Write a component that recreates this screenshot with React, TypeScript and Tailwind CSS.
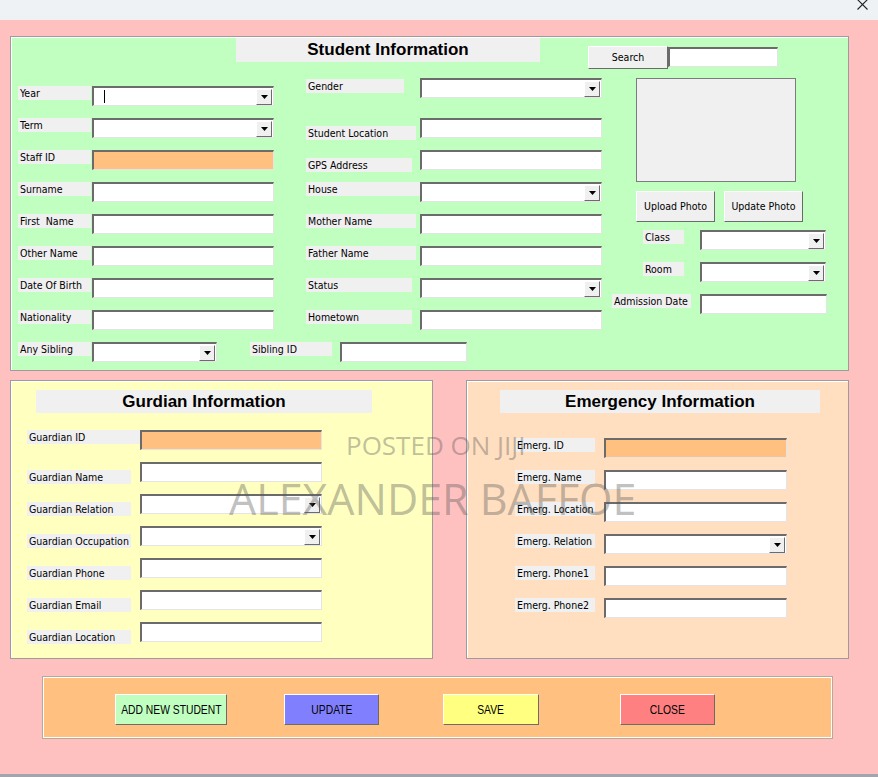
import React from "react";

type Kind = "text" | "drop" | "orange";

const sunken =
  "border-t-2 border-l-2 border-r border-b border-t-[#6b6b6b] border-l-[#6b6b6b] border-r-[#e4e4e4] border-b-[#e4e4e4]";
const raised =
  "border border-t-white border-l-white border-r-[#6b6b6b] border-b-[#6b6b6b]";

const Arrow = () => (
  <div className={`w-[16px] h-[16px] bg-[#f0f0f0] ${raised} flex items-center justify-center`}>
    <svg width="7" height="4" viewBox="0 0 7 4">
      <path d="M0 0h7L3.5 4z" fill="#000" />
    </svg>
  </div>
);

interface BoxProps {
  kind?: Kind;
  width?: string;
  caret?: boolean;
}

const Box = ({ kind = "text", width = "w-[182px]", caret = false }: BoxProps) => (
  <div
    className={`${width} h-[20px] shrink-0 ${sunken} ${
      kind === "orange" ? "bg-[#ffc080]" : "bg-white"
    } flex items-center`}
  >
    {caret && <div className="ml-[10px] w-px h-[13px] bg-black" />}
    {kind === "drop" && (
      <div className="ml-auto mr-px">
        <Arrow />
      </div>
    )}
  </div>
);

interface LabelProps {
  text: string;
  outer: string;
  inner: string;
  shift?: string;
}

const Label = ({ text, outer, inner, shift = "" }: LabelProps) => (
  <div className={`${outer} h-[20px] shrink-0`}>
    <div className={`${inner} ${shift} h-[14px] bg-[#f0f0f0] pl-[2px] leading-[14px] whitespace-pre`}>
      {text}
    </div>
  </div>
);

const FormButton = ({ text, size }: { text: string; size: string }) => (
  <div className={`${size} bg-[#f0f0f0] ${raised} flex items-center justify-center shrink-0`}>
    {text}
  </div>
);

const ActionButton = ({ text, style }: { text: string; style: string }) => (
  <div className={`${style} mt-[17px] h-[31px] ${raised} flex items-center justify-center`}>
    <span className="inline-block scale-x-[0.86] whitespace-nowrap">{text}</span>
  </div>
);

const leftRows: { label: string; kind?: Kind; caret?: boolean }[] = [
  { label: "Year", kind: "drop", caret: true },
  { label: "Term", kind: "drop" },
  { label: "Staff ID", kind: "orange" },
  { label: "Surname" },
  { label: "First  Name" },
  { label: "Other Name" },
  { label: "Date Of Birth" },
  { label: "Nationality" },
];

const midRows: { label: string; kind?: Kind; inner: string; shift?: string }[] = [
  { label: "Gender", kind: "drop", inner: "w-[98px]", shift: "mt-px" },
  { label: "Student Location", inner: "w-[110px]", shift: "mt-[8px]" },
  { label: "GPS Address", inner: "w-[106px]", shift: "mt-[8px]" },
  { label: "House", kind: "drop", inner: "w-[114px]" },
  { label: "Mother Name", inner: "w-[110px]" },
  { label: "Father Name", inner: "w-[110px]" },
  { label: "Status", kind: "drop", inner: "w-[106px]" },
  { label: "Hometown", inner: "w-[106px]" },
];

const guardianRows: { label: string; kind?: Kind }[] = [
  { label: "Guardian ID", kind: "orange" },
  { label: "Guardian Name" },
  { label: "Guardian Relation", kind: "drop" },
  { label: "Guardian Occupation", kind: "drop" },
  { label: "Guardian Phone" },
  { label: "Guardian Email" },
  { label: "Guardian Location" },
];

const emergencyRows: { label: string; kind?: Kind }[] = [
  { label: "Emerg. ID", kind: "orange" },
  { label: "Emerg. Name" },
  { label: "Emerg. Location" },
  { label: "Emerg. Relation", kind: "drop" },
  { label: "Emerg. Phone1" },
  { label: "Emerg. Phone2" },
];

const panel = "border border-[#9c9c9c] shadow-[inset_1px_1px_0_#ffffff]";
const heading =
  "h-[23px] bg-[#f0f0f0] flex items-center justify-center font-['Liberation_Sans',Arial,sans-serif] font-bold text-[17px] text-black";

export default function App() {
  return (
    <div className="relative w-[878px] h-[777px] overflow-hidden font-['DejaVu_Sans_Condensed','Liberation_Sans',Arial,sans-serif] text-[10.5px] text-black">
      {/* window title strip */}
      <div className="h-[20px] bg-[#eef2f5] flex justify-end pr-[10px]">
        <svg width="11" height="11" viewBox="0 0 11 11" className="-mt-[1px]">
          <path d="M0.5 0.5l10 10M10.5 0.5l-10 10" stroke="#222" strokeWidth="1.1" />
        </svg>
      </div>

      <div className="h-[754px] bg-[#ffc0c0] pt-[16px] pl-[10px]">
        {/* student section */}
        <div className={`w-[839px] h-[335px] bg-[#c0ffc0] ${panel} flex flex-col`}>
          <div className="h-[41px] flex items-start shrink-0">
            <div className={`ml-[225px] mt-px w-[304px] !h-[24px] ${heading}`}>Student Information</div>
            <div className="ml-[48px] mt-[9px]">
              <FormButton text="Search" size="w-[80px] h-[23px]" />
            </div>
            <div className="mt-[10px]">
              <Box width="w-[110px]" />
            </div>
          </div>

          <div className="flex">
            <div className="ml-[7px] flex flex-col gap-[12px]">
              {leftRows.map((row, i) => (
                <div key={row.label} className="flex gap-[32px]">
                  <div className={`flex ${i === 0 ? "mt-[8px]" : ""}`}>
                    <Label text={row.label} outer="w-[74px]" inner="w-[73px]" />
                    <Box kind={row.kind} caret={row.caret} />
                  </div>
                  <div className="flex">
                    <Label
                      text={midRows[i].label}
                      outer="w-[114px]"
                      inner={midRows[i].inner}
                      shift={midRows[i].shift}
                    />
                    <Box kind={midRows[i].kind} />
                  </div>
                </div>
              ))}
              <div className="flex">
                <Label text="Any Sibling" outer="w-[74px]" inner="w-[73px]" />
                <Box kind="drop" width="w-[125px]" />
                <div className="ml-[33px] flex">
                  <Label text="Sibling ID" outer="w-[90px]" inner="w-[82px]" />
                  <Box width="w-[127px]" />
                </div>
              </div>
            </div>

            <div className="ml-[10px] flex flex-col">
              <div className="ml-[24px] w-[160px] h-[104px] bg-[#f0f0f0] border border-[#7c7c7c]" />
              <div className="ml-[24px] mt-[9px] flex gap-[9px]">
                <FormButton text="Upload Photo" size="w-[79px] h-[31px]" />
                <FormButton text="Update Photo" size="w-[79px] h-[31px]" />
              </div>
              <div className="ml-[31px] mt-[8px] flex">
                <Label text="Class" outer="w-[57px]" inner="w-[41px]" />
                <Box kind="drop" width="w-[126px]" />
              </div>
              <div className="ml-[31px] mt-[12px] flex">
                <Label text="Room" outer="w-[57px]" inner="w-[41px]" />
                <Box kind="drop" width="w-[126px]" />
              </div>
              <div className="mt-[12px] flex">
                <Label text="Admission Date" outer="w-[88px]" inner="w-[79px]" />
                <Box width="w-[127px]" />
              </div>
            </div>
          </div>
        </div>

        <div className="mt-[9px] flex">
          {/* guardian section */}
          <div className={`w-[423px] h-[279px] bg-[#ffffc0] ${panel}`}>
            <div className={`ml-[25px] mt-[9px] w-[336px] ${heading}`}>Gurdian Information</div>
            <div className="ml-[16px] mt-[17px] flex flex-col gap-[12px]">
              {guardianRows.map((row, i) => (
                <div key={row.label} className="flex">
                  <Label
                    text={row.label}
                    outer="w-[113px]"
                    inner={i === 0 ? "w-[113px]" : "w-[104px]"}
                    shift={i === 0 ? "" : "mt-[8px]"}
                  />
                  <Box kind={row.kind} />
                </div>
              ))}
            </div>
          </div>

          {/* emergency section */}
          <div className={`ml-[33px] w-[383px] h-[279px] bg-[#ffdfc0] ${panel}`}>
            <div className={`ml-[33px] mt-[9px] w-[320px] ${heading}`}>Emergency Information</div>
            <div className="ml-[48px] mt-[25px] flex flex-col gap-[12px]">
              {emergencyRows.map((row) => (
                <div key={row.label} className="flex">
                  <Label text={row.label} outer="w-[89px]" inner="w-[80px]" />
                  <Box kind={row.kind} width="w-[183px]" />
                </div>
              ))}
            </div>
          </div>
        </div>

        {/* action bar */}
        <div className="ml-[32px] mt-[17px] w-[791px] h-[63px] bg-[#ffc080] border border-[#b8a898] shadow-[inset_1px_1px_0_#ffffff,inset_-1px_-1px_0_#ffffff] flex items-start font-['Liberation_Sans',Arial,sans-serif] text-[12px]">
          <ActionButton text="ADD NEW STUDENT" style="ml-[72px] w-[112px] bg-[#c0ffc0]" />
          <ActionButton text="UPDATE" style="ml-[57px] w-[95px] bg-[#8080ff]" />
          <ActionButton text="SAVE" style="ml-[64px] w-[96px] bg-[#ffff80]" />
          <ActionButton text="CLOSE" style="ml-[81px] w-[95px] bg-[#ff8080]" />
        </div>
      </div>
      <div className="h-[3px] bg-[#a4a4ac]" />

      {/* watermark over the form */}
      <div className="absolute left-[346px] top-[430px] font-['Open_Sans',sans-serif] text-[26px] leading-[30px] text-[#5a5a5a]/40 whitespace-nowrap pointer-events-none">
        POSTED ON JIJI
      </div>
      <div className="absolute left-[229px] top-[473px] font-['Open_Sans',sans-serif] text-[43px] leading-[52px] text-[#5a5a5a]/40 whitespace-nowrap pointer-events-none">
        ALEXANDER BAFFOE
      </div>
    </div>
  );
}
